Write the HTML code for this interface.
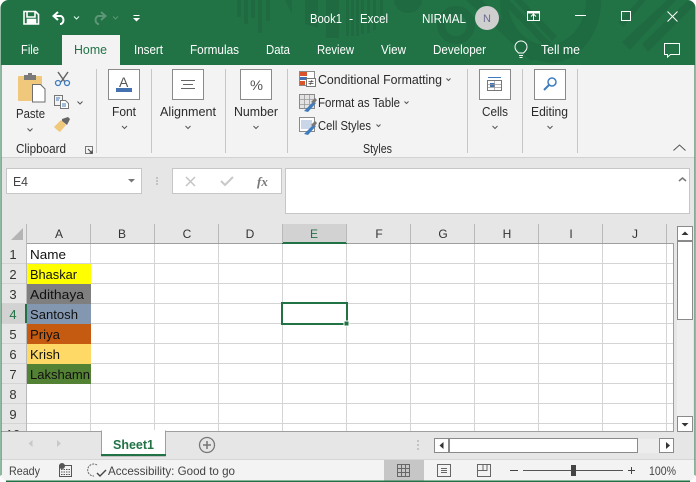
<!DOCTYPE html>
<html><head><meta charset="utf-8"><style>
html,body{margin:0;padding:0;background:#fff;width:696px;height:482px;overflow:hidden}
svg{display:block}
text{font-family:"Liberation Sans",sans-serif;font-size:12.5px;fill:#2b2b2b}
.w{fill:#fff;font-size:12.5px}
.c{font-size:13px;fill:#111}
.h{font-size:12px;fill:#333;text-anchor:middle}
.g{stroke:#d4d4d4;stroke-width:1;fill:none}
.sep{stroke:#c6c6c6;stroke-width:1}
.chev{fill:none;stroke:#555;stroke-width:1}
.box{fill:#fff;stroke:#8a8a8a;stroke-width:1}
</style></head><body>
<svg width="696" height="482" viewBox="0 0 696 482" xmlns="http://www.w3.org/2000/svg">
<rect width="696" height="482" fill="#217346"/>
<!-- title pattern -->
<g fill="#1f6a41">
<rect x="237" y="0" width="4" height="17"/><rect x="244" y="0" width="4" height="24"/><rect x="251" y="0" width="4" height="18"/><rect x="258" y="0" width="4" height="33"/><rect x="266" y="0" width="4" height="21"/>
<path d="M285 0h7v14z"/><path d="M305 0h13v28l-13-4z"/>
<rect x="326" y="0" width="13" height="38"/><rect x="346" y="0" width="3" height="36"/><rect x="351" y="0" width="3" height="36"/><rect x="356" y="0" width="3" height="36"/><rect x="361" y="0" width="3" height="34"/><rect x="367" y="0" width="3" height="33"/><rect x="373" y="0" width="3" height="30"/><rect x="380" y="0" width="3" height="22"/>
<path d="M394 0h28a14 13 0 0 1-28 0z"/>
<circle cx="456" cy="25" r="15" fill="none" stroke="#1f6a41" stroke-width="8"/>
<path d="M466 0h16l58 58-9 3z M500 0h9l42 43-5 5z M514 0h8l35 36-5 5z"/>
<path d="M500 0a52 60 0 0 0 60 62h0a54 62 0 0 0 41-62h-15a39 45 0 0 1-78 0z" opacity=".95"/>
<path d="M622 42l45-42h9l-46 50z M642 44l46-44h4l6 2-50 50z M618 22l21-22h7l-23 27z"/>
</g>
<!-- QAT -->
<g fill="none" stroke="#fff" stroke-width="1.6">
<path d="M24 11.500h11.500l3 3v9.500h-14.500z"/><path d="M27 12v5h8v-5"/><path d="M27.500 24v-4.500h8v4.500" fill="#fff"/>
</g>
<path d="M58 12l-4.500 4 4.500 4M54 16h7a4.500 4.500 0 0 1 0 8h-1" fill="none" stroke="#fff" stroke-width="2"/>
<path d="M74 16.500l2.500 2.500 2.500-2.500" fill="none" stroke="#dfe" stroke-width="1"/>
<path d="M101 12l4.500 4-4.500 4M105 16h-7a4.500 4.500 0 0 0 0 8h1" fill="none" stroke="#5c9676" stroke-width="2"/>
<path d="M113 16.500l2.500 2.500 2.500-2.500" fill="none" stroke="#5c9676" stroke-width="1"/>
<rect x="133.500" y="15" width="6" height="1" fill="#fff"/><path d="M133 18h7l-3.500 3.500z" fill="#fff"/>
<!-- title text -->
<text class="w" x="310" y="23" textLength="32" lengthAdjust="spacingAndGlyphs">Book1</text>
<text class="w" x="349" y="23">-</text>
<text class="w" x="360" y="23" textLength="28" lengthAdjust="spacingAndGlyphs">Excel</text>
<text class="w" x="422" y="23" textLength="44" lengthAdjust="spacingAndGlyphs">NIRMAL</text>
<circle cx="487" cy="18" r="12" fill="#d0cfcf"/>
<text x="483" y="22" style="font-size:11px;fill:#6b6b90">N</text>
<g fill="none" stroke="#fff" stroke-width="1">
<rect x="527.500" y="11.500" width="12" height="9"/><rect x="527.500" y="11.500" width="12" height="1.500" fill="#fff"/>
<path d="M533.500 20.500v-6M531 16.500l2.500-2.500 2.500 2.500"/>
<rect x="621.500" y="11.500" width="9" height="9"/>
<path d="M667.500 11.500l10 10M677.500 11.500l-10 10"/>
</g>
<rect x="575" y="15" width="11" height="1" fill="#fff"/>
<!-- tabs -->
<rect x="1" y="65" width="694" height="93" fill="#f3f3f3"/>
<rect x="62" y="35" width="58" height="31" fill="#f3f3f3"/>
<text class="w" x="21" y="54" textLength="18" lengthAdjust="spacingAndGlyphs">File</text>
<text x="74" y="54" textLength="33" lengthAdjust="spacingAndGlyphs" style="fill:#217346">Home</text>
<text class="w" x="134" y="54" textLength="29" lengthAdjust="spacingAndGlyphs">Insert</text>
<text class="w" x="190" y="54" textLength="49" lengthAdjust="spacingAndGlyphs">Formulas</text>
<text class="w" x="266" y="54" textLength="24" lengthAdjust="spacingAndGlyphs">Data</text>
<text class="w" x="317" y="54" textLength="37" lengthAdjust="spacingAndGlyphs">Review</text>
<text class="w" x="381" y="54" textLength="25" lengthAdjust="spacingAndGlyphs">View</text>
<text class="w" x="433" y="54" textLength="53" lengthAdjust="spacingAndGlyphs">Developer</text>
<text class="w" x="541" y="54" textLength="39" lengthAdjust="spacingAndGlyphs">Tell me</text>
<g fill="none" stroke="#fff" stroke-width="1">
<path d="M518.500 53c-2-2-3.500-3.500-3.500-6a6 6 0 0 1 12 0c0 2.500-1.500 4-3.500 6z"/><path d="M519 55.500h4M519.500 57.500h3"/>
<path d="M664.500 43.500h15v11h-9l-3 2.500v-2.500h-3z"/>
</g>
<!-- ribbon separators -->
<g class="sep">
<path d="M96.500 69v84M151.500 69v84M225.500 69v84M287.500 69v84M467.500 69v84M522.500 69v84M577.500 69v84"/>
</g>
<!-- clipboard -->
<rect x="18" y="76" width="24" height="25" rx="1" fill="#f0c87c"/>
<rect x="24" y="75" width="12" height="5" fill="#7a7a7a"/><rect x="28" y="73" width="4" height="4" fill="#7a7a7a"/>
<path d="M32.500 84.500h8l4.500 4.500v13h-12.500z" fill="#fff" stroke="#6e6e6e"/>
<text x="16" y="118" textLength="29" lengthAdjust="spacingAndGlyphs">Paste</text>
<path class="chev" d="M27.500 128.500l2.500 2.500 2.500-2.500"/>
<path d="M58 72l7 10M68 72l-7 10" stroke="#666" stroke-width="1.500"/>
<circle cx="58" cy="83" r="2.500" fill="none" stroke="#3f7cbf" stroke-width="1.300"/><circle cx="67" cy="83" r="2.500" fill="none" stroke="#3f7cbf" stroke-width="1.300"/>
<rect x="54.500" y="95.500" width="8" height="10" fill="#f3f3f3" stroke="#777"/><path d="M60.500 100.500h5l3 3v5h-8z" fill="#fff" stroke="#777"/>
<path d="M56 98h4M56 100h3M62 104h4M62 106h4" stroke="#3f7cbf"/>
<path class="chev" d="M77.500 101.500l2.500 2.500 2.500-2.500"/>
<path d="M54 127l7-7 5 5-6 7c-2-1-4-3-6-5z" fill="#f0c87c"/><path d="M62 119l6-2 2 2-3 6-5-4z" fill="#666"/>
<text x="16" y="153" textLength="50" lengthAdjust="spacingAndGlyphs">Clipboard</text>
<rect x="85.500" y="146.500" width="7" height="7" fill="none" stroke="#777"/><path d="M88 149l4 4M92 150.500v2.500h-2.500" fill="none" stroke="#444"/>
<!-- Font -->
<rect class="box" x="108.500" y="69.500" width="31" height="30"/>
<text x="119" y="87" style="font-size:14px;fill:#555">A</text>
<rect x="116" y="88" width="16" height="4" fill="#4472b0"/>
<text x="112" y="116" textLength="24" lengthAdjust="spacingAndGlyphs">Font</text>
<path class="chev" d="M122 126l2.500 2.500 2.500-2.500"/>
<!-- Alignment -->
<rect class="box" x="172.500" y="69.500" width="31" height="30"/>
<path d="M181 80.500h14M183 84.500h10M181 88.500h14" stroke="#666"/>
<text x="160" y="116" textLength="56" lengthAdjust="spacingAndGlyphs">Alignment</text>
<path class="chev" d="M185.500 126l2.500 2.500 2.500-2.500"/>
<!-- Number -->
<rect class="box" x="240.500" y="69.500" width="31" height="30"/>
<text x="250" y="90" style="font-size:14px;fill:#555" textLength="13" lengthAdjust="spacingAndGlyphs">%</text>
<text x="234" y="116" textLength="44" lengthAdjust="spacingAndGlyphs">Number</text>
<path class="chev" d="M253.500 126l2.500 2.500 2.500-2.500"/>
<!-- Styles -->
<rect x="299.500" y="71.500" width="15" height="14" fill="#fff" stroke="#8a8a8a"/>
<rect x="300" y="72" width="7" height="4" fill="#d9542b"/><rect x="300" y="77" width="7" height="3" fill="#4472b0"/><rect x="300" y="81" width="5" height="4" fill="#d9542b"/>
<rect x="306.500" y="78.500" width="9" height="8" fill="#fff" stroke="#777"/><path d="M308.500 81.500h5M308.500 83.500h5M312 80l-2 5" stroke="#444" stroke-width=".7"/>
<text x="318" y="84" textLength="124" lengthAdjust="spacingAndGlyphs">Conditional Formatting</text>
<path class="chev" d="M446.500 78.500l2 2 2-2"/>
<rect x="299.500" y="94.500" width="15" height="14" fill="#e3e3e3" stroke="#8a8a8a"/><path d="M304.500 95v13M309.500 95v13M300 99.500h14M300 104.500h14" stroke="#9a9a9a" stroke-width=".8"/><path d="M304 111l9-9 3 1-8 9z" fill="#3f7cbf"/><path d="M311 102l4-4 2 2-3 4z" fill="#777"/>
<text x="318" y="107" textLength="82" lengthAdjust="spacingAndGlyphs">Format as Table</text>
<path class="chev" d="M404.500 101.500l2 2 2-2"/>
<rect x="299.500" y="117.500" width="15" height="14" fill="#fff" stroke="#8a8a8a"/><rect x="301" y="120" width="11" height="9" fill="#c9d6e8"/><path d="M304 134l9-9 3 1-8 9z" fill="#3f7cbf"/><path d="M311 125l4-4 2 2-3 4z" fill="#777"/>
<text x="318" y="130" textLength="53" lengthAdjust="spacingAndGlyphs">Cell Styles</text>
<path class="chev" d="M376.500 124.500l2 2 2-2"/>
<text x="363" y="153" textLength="29" lengthAdjust="spacingAndGlyphs">Styles</text>
<!-- Cells -->
<rect class="box" x="479.500" y="69.500" width="31" height="30"/>
<rect x="487.500" y="80.500" width="14" height="10" fill="#fff" stroke="#777"/><rect x="490" y="83" width="5" height="4" fill="#4472b0"/>
<path d="M488 77.500h13" stroke="#3f7cbf"/><path d="M494.500 81v9M488 84.500h13M488 87.500h13" stroke="#999" stroke-width=".7"/>
<text x="482" y="116" textLength="26" lengthAdjust="spacingAndGlyphs">Cells</text>
<path class="chev" d="M492.500 126l2.500 2.500 2.500-2.500"/>
<!-- Editing -->
<rect class="box" x="534.500" y="69.500" width="31" height="30"/>
<circle cx="552" cy="82" r="4" fill="none" stroke="#3f7cbf" stroke-width="1.500"/><path d="M549 85l-5 5" stroke="#3f7cbf" stroke-width="2"/>
<text x="531" y="116" textLength="37" lengthAdjust="spacingAndGlyphs">Editing</text>
<path class="chev" d="M547.500 126l2.500 2.500 2.500-2.500"/>
<path d="M673.500 150.500l6-5.500 6 5.500" fill="none" stroke="#555"/>
<rect x="1" y="157" width="694" height="1" fill="#d2d2d2"/>
<!-- formula bar -->
<rect x="1" y="158" width="694" height="274" fill="#e6e6e6"/>
<rect x="6.500" y="168.500" width="135" height="25" fill="#fff" stroke="#c6c6c6"/>
<text x="13" y="186" textLength="15" lengthAdjust="spacingAndGlyphs" style="font-size:13px;fill:#444">E4</text>
<path d="M128 179h7l-3.500 3.500z" fill="#777"/>
<circle cx="157" cy="178" r=".9" fill="#aaa"/><circle cx="157" cy="181" r=".9" fill="#aaa"/><circle cx="157" cy="184" r=".9" fill="#aaa"/>
<rect x="172.500" y="168.500" width="109" height="25" fill="#fff" stroke="#c6c6c6"/>
<path d="M186 177l9 9M195 177l-9 9" stroke="#c4c4c4" stroke-width="1.500"/>
<path d="M221 181l4 4 8-8" fill="none" stroke="#c8c8c8" stroke-width="2"/>
<text x="257" y="186" style="font-family:'Liberation Serif',serif;font-style:italic;font-weight:bold;font-size:13px;fill:#777">fx</text>
<rect x="285.500" y="168.500" width="404" height="45" fill="#fff" stroke="#c6c6c6"/>
<path d="M679 181l3.500-3 3.500 3" fill="none" stroke="#777" stroke-width="1.500"/>
<!-- grid -->
<rect x="1" y="224" width="672" height="19" fill="#e6e6e6"/>
<rect x="27" y="244" width="646" height="187" fill="#fff"/>
<rect x="1" y="244" width="26" height="187" fill="#e6e6e6"/>
<path d="M23 228v12h-12z" fill="#b4b4b4"/>
<rect x="282" y="224" width="65" height="19" fill="#d2d2d2"/>
<rect x="27" y="243" width="646" height="1" fill="#9f9f9f"/>
<rect x="282" y="242" width="65" height="2" fill="#217346"/>
<g stroke="#b9b9b9"><path d="M26.500 224v20M90.500 224v19M154.500 224v19M218.500 224v19M282.500 224v19M346.500 224v19M410.500 224v19M474.500 224v19M538.500 224v19M602.500 224v19M666.500 224v19"/></g>
<g class="g">
<path d="M90.500 244v187M154.500 244v187M218.500 244v187M282.500 244v187M346.500 244v187M410.500 244v187M474.500 244v187M538.500 244v187M602.500 244v187M666.500 244v187"/>
<path d="M1 263.500h672M1 283.500h672M1 303.500h672M1 323.500h672M1 343.500h672M1 363.500h672M1 383.500h672M1 403.500h672M1 423.500h672"/>
</g>
<rect x="26" y="244" width="1" height="187" fill="#b9b9b9"/>
<rect x="673" y="243" width="1" height="189" fill="#9f9f9f"/>
<text class="h" x="59" y="238">A</text><text class="h" x="122" y="238">B</text><text class="h" x="187" y="238">C</text><text class="h" x="250" y="238">D</text><text class="h" x="314" y="238" style="fill:#217346">E</text><text class="h" x="379" y="238">F</text><text class="h" x="443" y="238">G</text><text class="h" x="507" y="238">H</text><text class="h" x="571" y="238">I</text><text class="h" x="635" y="238">J</text>
<rect x="1" y="304" width="25" height="19" fill="#d2d2d2"/><rect x="25" y="304" width="2" height="19" fill="#217346"/>
<text class="h" x="13" y="259" style="font-size:13px">1</text><text class="h" x="13" y="279" style="font-size:13px">2</text><text class="h" x="13" y="299" style="font-size:13px">3</text><text class="h" x="13" y="319" style="font-size:13px;fill:#217346">4</text><text class="h" x="13" y="339" style="font-size:13px">5</text><text class="h" x="13" y="359" style="font-size:13px">6</text><text class="h" x="13" y="379" style="font-size:13px">7</text><text class="h" x="13" y="399" style="font-size:13px">8</text><text class="h" x="13" y="419" style="font-size:13px">9</text><text class="h" x="13" y="439" style="font-size:13px">10</text>
<rect x="27" y="264" width="64" height="20" fill="#ffff00"/>
<rect x="27" y="284" width="64" height="20" fill="#7f7f7f"/>
<rect x="27" y="304" width="64" height="20" fill="#8497b0"/>
<rect x="27" y="324" width="64" height="20" fill="#c55a11"/>
<rect x="27" y="344" width="64" height="20" fill="#ffd966"/>
<rect x="27" y="364" width="64" height="20" fill="#548235"/>
<text class="c" x="30" y="259" textLength="36" lengthAdjust="spacingAndGlyphs">Name</text>
<text class="c" x="30" y="279" textLength="47" lengthAdjust="spacingAndGlyphs">Bhaskar</text>
<text class="c" x="30" y="299" textLength="54" lengthAdjust="spacingAndGlyphs">Adithaya</text>
<text class="c" x="30" y="319" textLength="48" lengthAdjust="spacingAndGlyphs">Santosh</text>
<text class="c" x="30" y="339" textLength="30" lengthAdjust="spacingAndGlyphs">Priya</text>
<text class="c" x="30" y="359" textLength="30" lengthAdjust="spacingAndGlyphs">Krish</text>
<text class="c" x="30" y="379" textLength="60" lengthAdjust="spacingAndGlyphs">Lakshamn</text>
<rect x="282" y="303" width="65" height="21" fill="none" stroke="#217346" stroke-width="2"/>
<rect x="344" y="321" width="5" height="5" fill="#217346" stroke="#fff" stroke-width="1"/>
<!-- vertical scrollbar -->
<rect x="677" y="320" width="16" height="96" fill="#efefef"/>
<rect x="677.500" y="226.500" width="15" height="14" fill="#fff" stroke="#8a8a8a"/>
<path d="M681.500 235h7l-3.500-3.500z" fill="#333"/>
<rect x="677.500" y="241.500" width="15" height="78" fill="#fff" stroke="#8a8a8a"/>
<rect x="677.500" y="416.500" width="15" height="15" fill="#fff" stroke="#8a8a8a"/>
<path d="M681.500 423h7l-3.500 3.500z" fill="#333"/>
<!-- tab bar -->
<rect x="1" y="432" width="694" height="27" fill="#e6e6e6"/>
<rect x="1" y="431" width="672" height="1" fill="#9f9f9f"/>
<path d="M32.500 440l-4 3.500 4 3.500z" fill="#c8c8c8"/><path d="M57 440l4 3.500-4 3.500z" fill="#c8c8c8"/>
<rect x="101.500" y="431" width="64" height="25" fill="#fff" stroke="#9f9f9f"/>
<rect x="102" y="430" width="63" height="3" fill="#fff"/>
<rect x="101" y="454" width="65" height="2" fill="#217346"/>
<text x="113" y="449" textLength="41" lengthAdjust="spacingAndGlyphs" style="font-weight:bold;fill:#217346;font-size:13px">Sheet1</text>
<circle cx="207" cy="445" r="7.500" fill="none" stroke="#777" stroke-width="1.300"/><path d="M203 445h8M207 441v8" stroke="#777" stroke-width="1.500"/>
<circle cx="418" cy="441" r=".9" fill="#aaa"/><circle cx="418" cy="445" r=".9" fill="#aaa"/><circle cx="418" cy="449" r=".9" fill="#aaa"/>
<rect x="638" y="439" width="22" height="14" fill="#ededed"/>
<rect x="434.500" y="438.500" width="14" height="14" fill="#fff" stroke="#8a8a8a"/><path d="M443.500 442l-4 3.500 4 3.500z" fill="#333"/>
<rect x="449.500" y="438.500" width="188" height="14" fill="#fff" stroke="#8a8a8a"/>
<rect x="659.500" y="438.500" width="14" height="14" fill="#fff" stroke="#8a8a8a"/><path d="M666 442l4 3.500-4 3.500z" fill="#333"/>
<!-- status bar -->
<rect x="1" y="459" width="694" height="22" fill="#f3f3f3"/>
<rect x="1" y="459" width="694" height="1" fill="#d6d6d6"/>
<text x="9" y="475" textLength="31" lengthAdjust="spacingAndGlyphs" style="font-size:12px;fill:#444">Ready</text>
<circle cx="62" cy="466" r="3" fill="#555"/><rect x="59.500" y="465.500" width="12" height="11" fill="none" stroke="#555"/><path d="M61 469.500h9M61 472h9M61 474.500h9" stroke="#555" stroke-dasharray="1.500 1"/>
<path d="M97 465a6 6 0 1 0 -3 11" fill="none" stroke="#666" stroke-dasharray="2 1"/><path d="M97 473l3 3 6-6" fill="none" stroke="#444" stroke-width="1.400"/>
<text x="108" y="475" textLength="127" lengthAdjust="spacingAndGlyphs" style="fill:#444;font-size:12px">Accessibility: Good to go</text>
<rect x="384" y="460" width="40" height="21" fill="#c6c6c6"/>
<g fill="none" stroke="#666"><rect x="397.500" y="464.500" width="12" height="12"/><path d="M401.500 465v11M405.500 465v11M398 468.500h11M398 472.500h11"/>
<rect x="437.500" y="464.500" width="13" height="12"/><path d="M441 468.500h6M441 470.500h6M441 472.500h6"/>
<path d="M477.500 464.500h13v12h-13zM477.500 470.500h5.500v-6M487 464.500v6h-4"/></g>
<rect x="510" y="470" width="8" height="1" fill="#444"/>
<rect x="523" y="470" width="100" height="1" fill="#555"/>
<rect x="571" y="465" width="5" height="11" fill="#444"/>
<path d="M628 470.500h7M631.500 467v7" stroke="#444"/>
<text x="649" y="475" textLength="27" lengthAdjust="spacingAndGlyphs" style="fill:#444;font-size:12px">100%</text>
<!-- window edge -->
<path d="M0 0h696v482h-696zM0.500 8v466a7 7 0 0 0 7 7h681a7 7 0 0 0 7-7v-466a8 8 0 0 0-8-8h-679a8 8 0 0 0-8 8z" fill="#fff" fill-rule="evenodd"/>
<rect x="0.500" y="60" width="1" height="415" fill="#217346"/>
<rect x="694.500" y="60" width="1" height="415" fill="#217346"/>
<rect x="6" y="480.500" width="684" height="1.500" fill="#217346"/>
</svg>
</body></html>
